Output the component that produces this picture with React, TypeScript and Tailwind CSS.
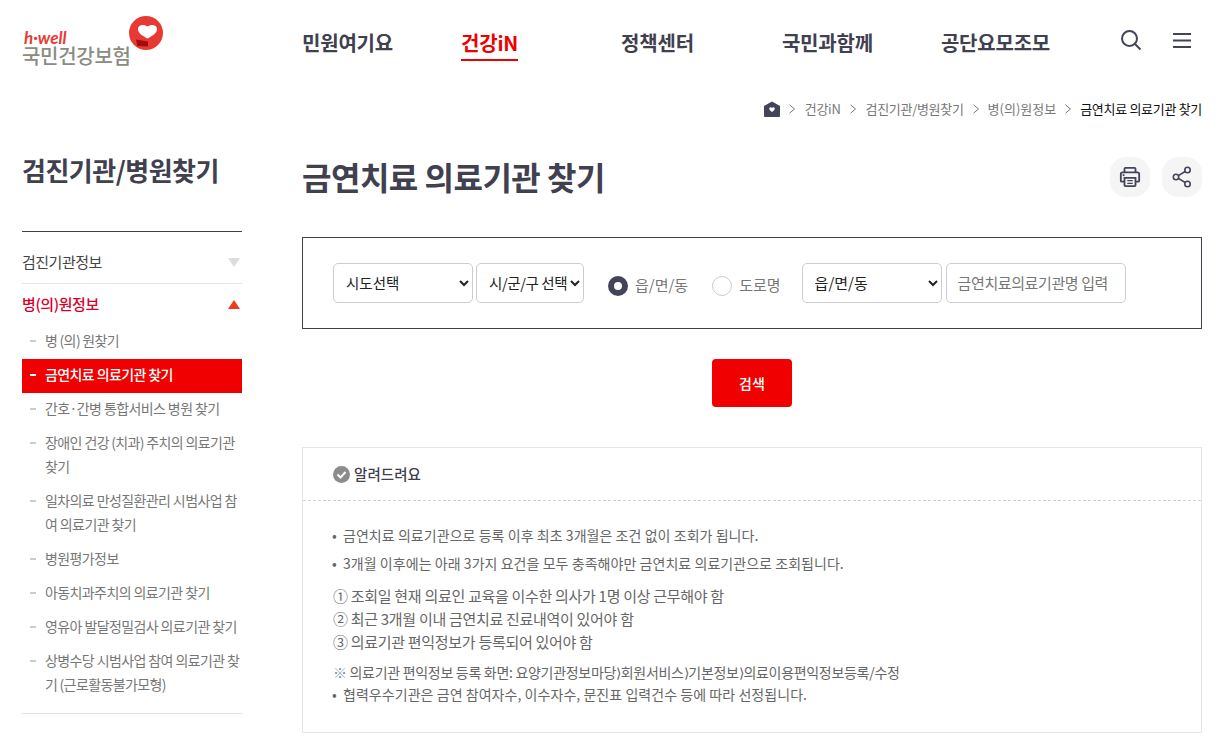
import React from 'react';

const navItems = [
    { label: '민원여기요', margin: 'ml-0' },
    { label: '건강iN', margin: 'ml-[68px]', active: true },
    { label: '정책센터', margin: 'ml-[103px]' },
    { label: '국민과함께', margin: 'ml-[88px]' },
    { label: '공단요모조모', margin: 'ml-[68px]' },
];

// thin spaces: the parens sit a little apart from the hangul in the original
const subMenu = [
    { label: '병\u2009(의)\u2009원찾기' },
    { label: '금연치료 의료기관 찾기', active: true },
    { label: '간호·간병 통합서비스 병원 찾기' },
    { label: '장애인 건강\u2009(치과)\u2009주치의 의료기관 찾기' },
    { label: '일차의료 만성질환관리 시범사업 참여 의료기관 찾기' },
    { label: '병원평가정보' },
    { label: '아동치과주치의 의료기관 찾기' },
    { label: '영유아 발달정밀검사 의료기관 찾기' },
    { label: '상병수당 시범사업 참여 의료기관 찾기\u2009(근로활동불가모형)' },
];

const Chevron = () => (
    <svg width="8" height="10" viewBox="0 0 8 10" fill="none" stroke="#777" strokeWidth="1" className="shrink-0">
        <path d="M1.5 0.8 L6.5 5 L1.5 9.2" />
    </svg>
);

const Logo = () => (
    <div className="relative w-[150px] h-[60px] mt-[11px]">
        <span className="absolute left-[24px] top-[19px] text-[17px] leading-[16px] font-bold italic text-[#e83a35] font-['Lato']">h·well</span>
        <span className="absolute left-[22px] top-[35px] text-[20px] leading-[20px] font-medium tracking-[-0.3px] text-[#8b8b83]">국민건강보험</span>
        <svg width="36" height="36" viewBox="0 0 36 36" className="absolute left-[128px] top-[5px]">
            <circle cx="18" cy="17" r="17" fill="#e83a35" />
            <path d="M8 24 L9 31 C14 33 20 33 25 30 L20 24 Z" fill="#e83a35" />
            <path d="M8 23.500 L20 25.500 L20 30.500 L9.300 30 Z" fill="#a30d0d" />
            <path d="M19.500 22.500 C14 19.500 10 17 10 13 C10 9 15.500 7.500 19.500 10.500 C23.500 7.500 29 9 29 13 C29 17 25 19.500 19.500 22.500 Z" fill="#fff" />
        </svg>
    </div>
);

const App = () => {
    return (
        <div className="w-[1226px] h-[748px] overflow-hidden bg-white font-['Noto_Sans_CJK_KR','Noto_Sans',sans-serif] text-[#40404f]">
            <header className="flex h-[85px]">
                <Logo />
                <nav className="flex items-start ml-[152px] pt-[28px] text-[20px] leading-[30px] font-bold text-[#40404f]">
                    {navItems.map((item) => (
                        <a key={item.label} className={`${item.margin} tracking-[-0.2px] ${item.active ? 'text-[#ee0000] border-b-2 border-[#ee0000] h-[33px]' : ''}`}>
                            {item.label}
                        </a>
                    ))}
                </nav>
                <div className="flex items-start ml-auto pt-[29px] pr-[35px] gap-[31px]">
                    <svg width="22" height="22" viewBox="0 0 22 22" fill="none" stroke="#43435a" strokeWidth="2">
                        <circle cx="9.500" cy="9.500" r="7.500" />
                        <path d="M15 15 L20.500 20.500" />
                    </svg>
                    <svg width="18" height="22" viewBox="0 0 18 22" fill="none" stroke="#43435a" strokeWidth="2">
                        <path d="M0 5 H18 M0 11.500 H18 M0 18 H18" />
                    </svg>
                </div>
            </header>

            <div className="flex justify-end items-center gap-[8px] h-[48px] pr-[24px] text-[13px] tracking-[-0.3px] text-[#777]">
                <svg width="16" height="16" viewBox="0 0 16 16">
                    <path d="M0 5 L8 0.500 L16 5 V15 Q16 16 15 16 H1 Q0 16 0 15 Z" fill="#43435a" />
                    <path d="M8 11 C6 9.500 5 8.500 5.300 7.300 C5.700 6 7.300 6 8 7 C8.700 6 10.300 6 10.700 7.300 C11 8.500 10 9.500 8 11 Z" fill="#fff" />
                </svg>
                <Chevron />
                <span className="ml-[1px]">건강iN</span>
                <Chevron />
                <span className="ml-[1px]">검진기관/병원찾기</span>
                <Chevron />
                <span className="tracking-[0px]">병(의)원정보</span>
                <Chevron />
                <span className="text-[#111]">금연치료 의료기관 찾기</span>
            </div>

            <div className="flex pl-[22px] pr-[24px]">
                <aside className="w-[220px] shrink-0">
                    <h2 className="mt-[19px] text-[26px] leading-[36px] font-bold text-[#40404f] tracking-[-0.5px]">검진기관/병원찾기</h2>
                    <div className="mt-[43px] border-t border-[#40404f]">
                        <div className="flex items-center justify-between h-[52px] pt-[10px] text-[15px] border-b border-[#e5e5e5] tracking-[-0.5px] text-[#444]">
                            <span>검진기관정보</span>
                            <span className="w-0 h-0 mr-[2px] border-x-[6px] border-x-transparent border-t-[9px] border-t-[#dddddd]" />
                        </div>
                        <div className="flex items-center justify-between h-[41px] text-[15px] font-medium tracking-[-0.4px] text-[#d9002b]">
                            <span>병(의)원정보</span>
                            <span className="w-0 h-0 mr-[2px] border-x-[6px] border-x-transparent border-b-[9px] border-b-[#f03a1a]" />
                        </div>
                        <ul className="pb-[10px] border-b border-[#e5e5e5] text-[14px] leading-[24px] tracking-[-0.6px] text-[#777]">
                            {subMenu.map((item) => (
                                <li key={item.label} className={`relative pl-[23px] pt-[3px] pb-[7px] ${item.active ? 'bg-[#f00000] text-white font-medium' : ''}`}>
                                    <span className={`absolute left-[8px] top-[15px] w-[6px] h-[2px] ${item.active ? 'bg-white' : 'bg-[#cccccc]'}`} />
                                    {item.label}
                                </li>
                            ))}
                        </ul>
                    </div>
                </aside>

                <main className="ml-[60px] flex-1">
                    <div className="flex items-center justify-between h-[70px] mt-[8px]">
                        <h1 className="text-[32px] leading-[48px] font-bold text-[#40404f] tracking-[-0.5px]">금연치료 의료기관 찾기</h1>
                        <div className="flex gap-[12px] mt-[2px]">
                            <button className="flex items-center justify-center w-[40px] h-[40px] rounded-[16px] bg-[#f5f5f5]">
                                <svg width="22" height="22" viewBox="0 0 24 24" fill="none" stroke="#43435a" strokeWidth="2">
                                    <path d="M6 7 V3 Q6 2 7 2 H17 Q18 2 18 3 V7" />
                                    <path d="M6 17 H3 Q2 17 2 16 V9 Q2 7 4 7 H20 Q22 7 22 9 V16 Q22 17 21 17 H18" />
                                    <path d="M6 13 H18 V21 Q18 22 17 22 H7 Q6 22 6 21 Z" />
                                    <path d="M9 16 H15 M9 19 H15" strokeWidth="1.500" />
                                    <path d="M4 10 H6" />
                                </svg>
                            </button>
                            <button className="flex items-center justify-center w-[40px] h-[40px] rounded-[16px] bg-[#f5f5f5]">
                                <svg width="20" height="22" viewBox="0 0 20 22" fill="none" stroke="#43435a" strokeWidth="1.600">
                                    <circle cx="15.500" cy="4" r="2.700" />
                                    <circle cx="4" cy="11" r="2.700" />
                                    <circle cx="15.500" cy="18" r="2.700" />
                                    <path d="M6.400 9.600 L13.100 5.500 M6.400 12.400 L13.100 16.500" />
                                </svg>
                            </button>
                        </div>
                    </div>

                    <div className="flex items-center h-[92px] mt-[26px] pl-[30px] border border-[#40404f] text-[15px]">
                        <select defaultValue="a" className="w-[140px] h-[40px] pl-[8px] pb-[2px] border border-[#cccccc] rounded-[5px] text-[14.500px] text-[#222] appearance-auto">
                            <option value="a">시도선택</option>
                        </select>
                        <select defaultValue="a" className="w-[108px] h-[40px] ml-[3px] pl-[8px] pb-[2px] border border-[#cccccc] rounded-[5px] text-[14.500px] tracking-[-0.4px] text-[#222] appearance-auto">
                            <option value="a">시/군/구 선택</option>
                        </select>
                        <span className="ml-[24px] w-[20px] h-[20px] rounded-full border-[6px] border-[#43435a] bg-white mt-[5px]" />
                        <span className="ml-[7px] mt-[4px] text-[#777]">읍/면/동</span>
                        <span className="ml-[24px] w-[20px] h-[20px] rounded-full border border-[#cccccc] bg-white mt-[5px]" />
                        <span className="ml-[7px] mt-[4px] text-[#777]">도로명</span>
                        <select defaultValue="a" className="w-[140px] h-[40px] ml-[21px] pl-[8px] pb-[2px] border border-[#cccccc] rounded-[5px] text-[#222] appearance-auto">
                            <option value="a">읍/면/동</option>
                        </select>
                        <input placeholder="금연치료의료기관명 입력" className="w-[180px] h-[40px] ml-[4px] px-[11px] pb-[2px] border border-[#cccccc] rounded-[5px] tracking-[-0.4px] placeholder:text-[#777]" />
                    </div>

                    <div className="flex justify-center mt-[30px]">
                        <button className="w-[80px] h-[48px] rounded-[4px] bg-[#f00000] text-white text-[14px] font-medium">검색</button>
                    </div>

                    <section className="mt-[40px] h-[286px] border border-[#e5e5e5] text-[14px] tracking-[0.05px] text-[#666]">
                        <div className="flex items-center gap-[4px] h-[53px] pl-[30px] border-b border-dashed border-[#d0d0d0]">
                            <svg width="17" height="17" viewBox="0 0 17 17">
                                <circle cx="8.500" cy="8.500" r="8.500" fill="#8c8c8c" />
                                <path d="M4.500 8.500 L7.500 11.500 L12.500 6" fill="none" stroke="#fff" strokeWidth="2" />
                            </svg>
                            <strong className="font-medium text-[14.500px] text-[#40404f]">알려드려요</strong>
                        </div>
                        <div className="pt-[23px] pl-[29px] leading-[23px]">
                            <p className="relative pl-[11px]"><span className="absolute left-0">•</span>금연치료 의료기관으로 등록 이후 최초 3개월은 조건 없이 조회가 됩니다.</p>
                            <p className="relative pl-[11px] mt-[5px]"><span className="absolute left-0">•</span>3개월 이후에는 아래 3가지 요건을 모두 충족해야만 금연치료 의료기관으로 조회됩니다.</p>
                            <ol className="mt-[9px] pl-[1px] text-[15px] tracking-[-0.3px]">
                                <li>① 조회일 현재 의료인 교육을 이수한 의사가 1명 이상 근무해야 함</li>
                                <li>② 최근 3개월 이내 금연치료 진료내역이 있어야 함</li>
                                <li>③ 의료기관 편익정보가 등록되어 있어야 함</li>
                            </ol>
                            <p className="mt-[8px] pl-[1px] leading-[22px] tracking-[-0.3px]"><span className="text-[#7f8fa0]">※</span> 의료기관 편익정보 등록 화면: 요양기관정보마당⟩회원서비스⟩기본정보⟩의료이용편익정보등록/수정</p>
                            <p className="relative pl-[11px] leading-[22px]"><span className="absolute left-0">•</span>협력우수기관은 금연 참여자수, 이수자수, 문진표 입력건수 등에 따라 선정됩니다.</p>
                        </div>
                    </section>
                </main>
            </div>
        </div>
    );
};

export default App;
